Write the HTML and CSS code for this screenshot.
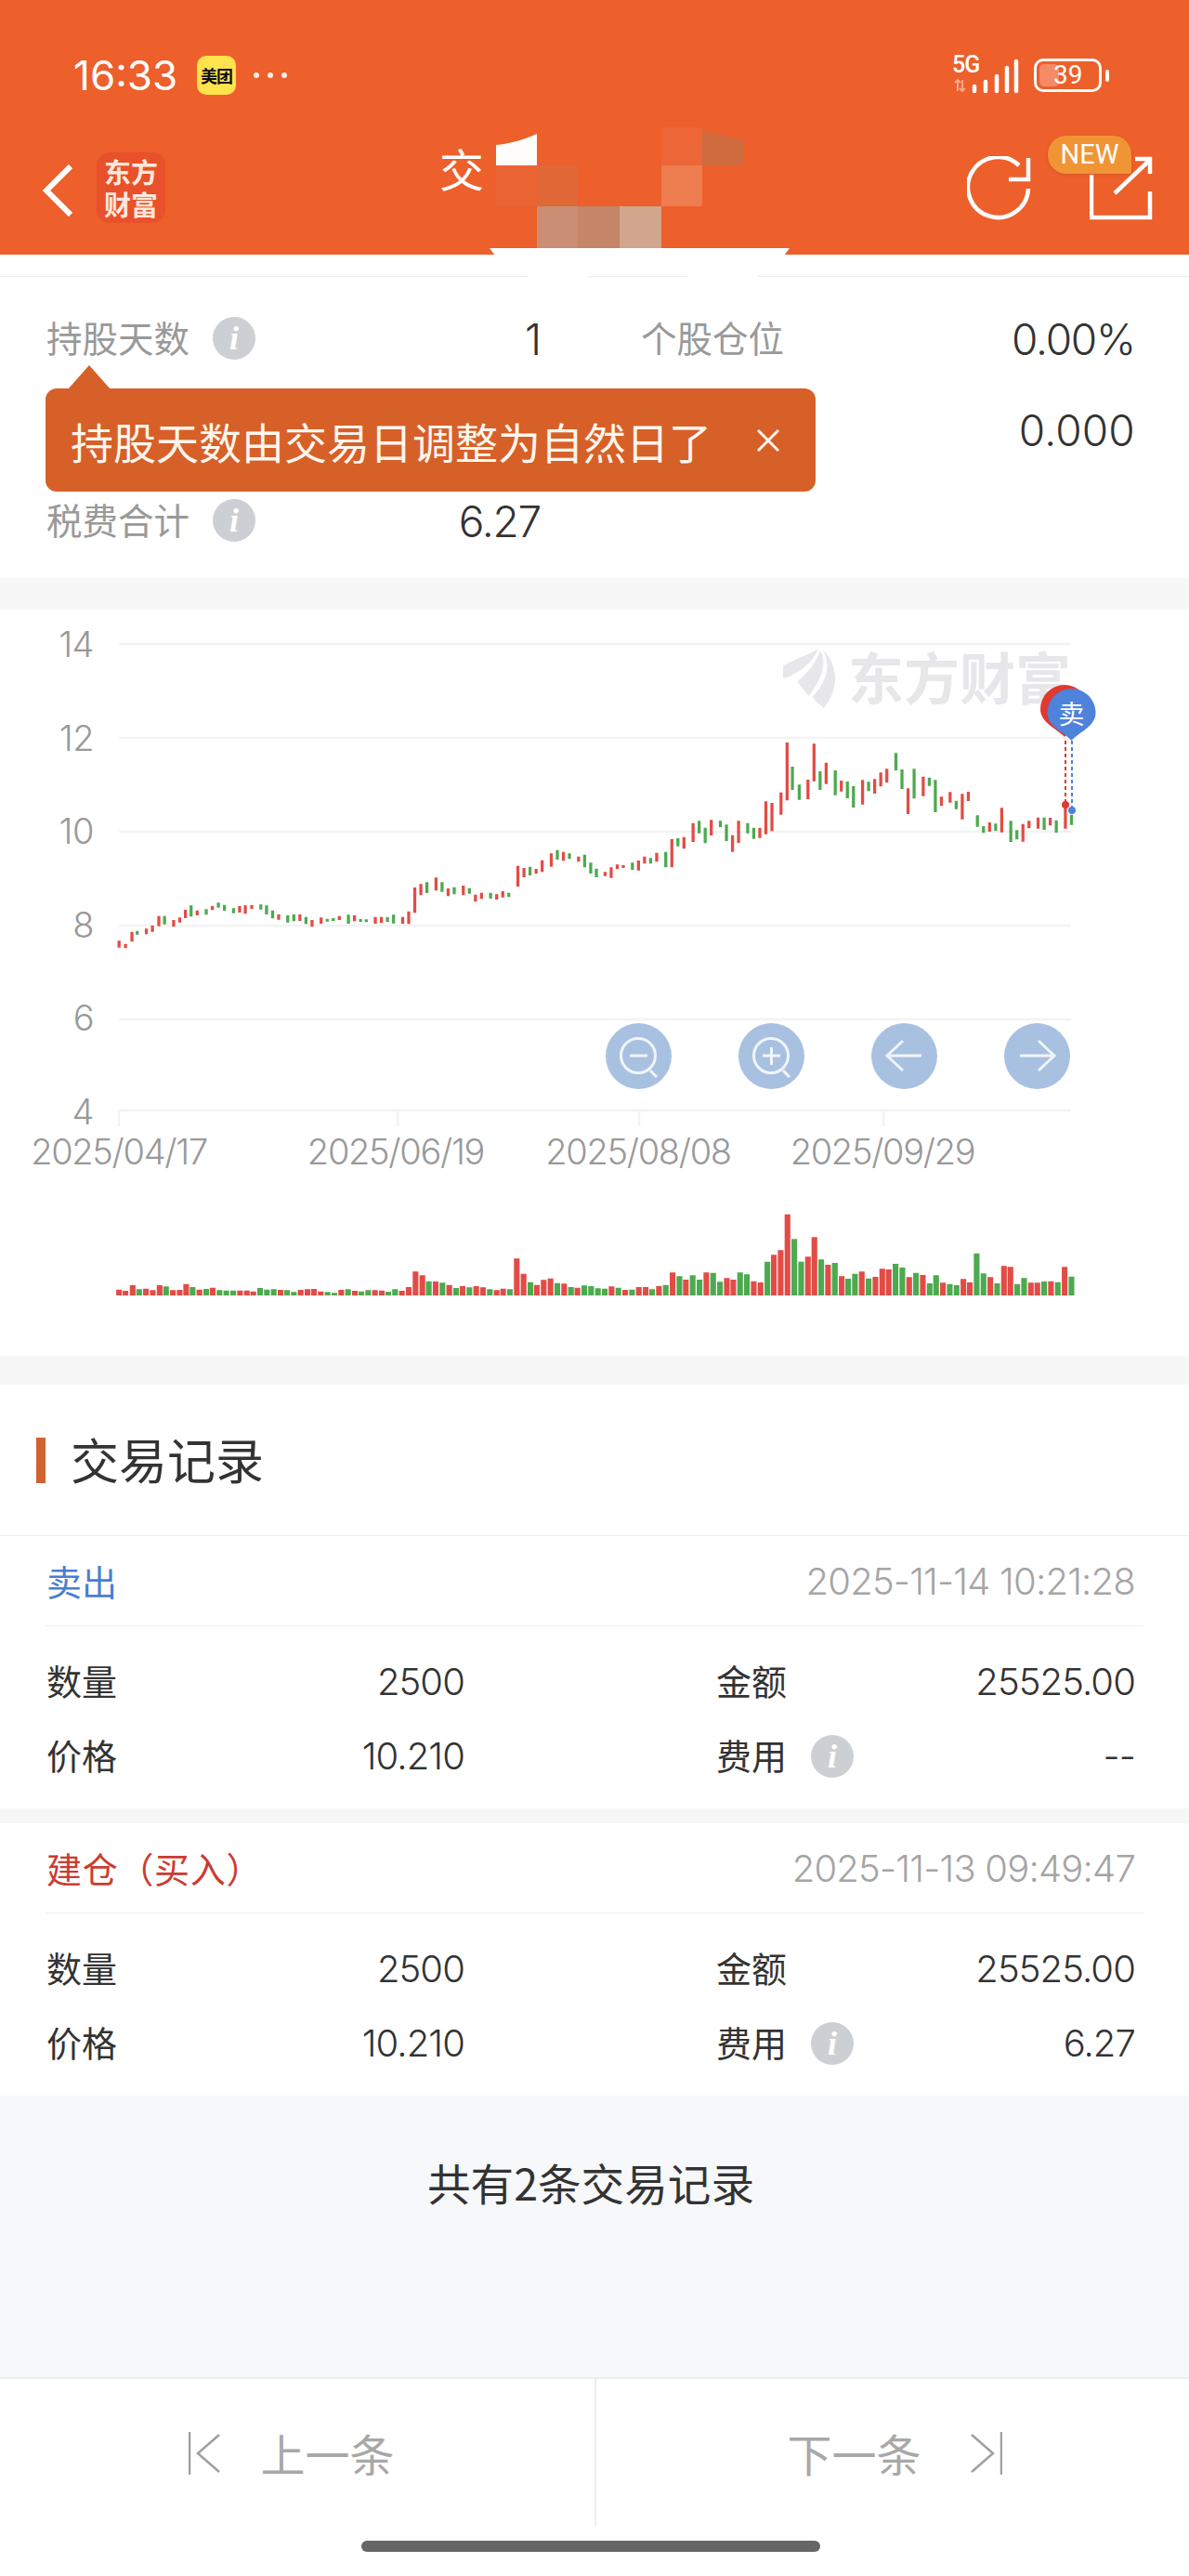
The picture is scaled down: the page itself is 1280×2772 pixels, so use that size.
FILE: index.html
```html
<!DOCTYPE html>
<html lang="zh-CN">
<head>
<meta charset="utf-8">
<title>交易详情</title>
<link rel="stylesheet" href="styles.css">
</head>
<body>
<div class="app">
  <header class="header">
    <div class="status">
      <div class="status-left">
        <span class="clock">16:33</span>
        <span class="meituan">美团</span>
        <span class="dots"><i></i><i></i><i></i></span>
      </div>
      <div class="status-right">
        <svg class="signal" width="72" height="44" viewBox="0 0 72 44">
          <text class="net" x="0" y="19">5G</text>
          <path class="sig-faint" d="M6 27v12M3 30l3-3 3 3M11 39V27M8 36l3 3 3-3"/>
          <path class="sig" d="M24 34v5M36 29v10M48 23v16M59 14v25M69 7v32"/>
        </svg>
        <span class="battery"><span class="battery-fill"></span><span class="battery-num">39</span></span>
        <span class="battery-tip"></span>
      </div>
    </div>
    <nav class="nav">
      <svg class="back" width="32" height="56" viewBox="0 0 32 56"><path d="M30 2 4 28l26 26"/></svg>
      <div class="logo"><span>东方</span><span>财富</span></div>
      <div class="title">交</div>
      <svg class="reload" width="70" height="70" viewBox="0 0 70 70"><path d="M56 10A32.5 32.5 0 1 0 66 35M66 2V25H45"/></svg>
      <div class="export">
        <svg width="70" height="70" viewBox="0 0 70 70"><path d="M2 20V66H65V38M27 40 65 4M49 3H65V19"/></svg>
        <span class="new">NEW</span>
      </div>
    </nav>
  </header>

  <section class="stats">
    <div class="stat-grid">
      <div class="stat"><span class="label">持股天数<i class="info">i</i></span><span class="value">1</span></div>
      <div class="stat"><span class="label">个股仓位</span><span class="value">0.00%</span></div>
      <div class="stat"></div>
      <div class="stat"><span></span><span class="value value-wide">0.000</span></div>
      <div class="stat"><span class="label">税费合计<i class="info">i</i></span><span class="value">6.27</span></div>
    </div>
    <div class="tip">
      <span>持股天数由交易日调整为自然日了</span>
      <svg class="tip-close" width="24" height="24" viewBox="0 0 24 24"><path d="M1 1l22 22M23 1 1 23"/></svg>
    </div>
  </section>

  <section class="chart">
    <svg class="chart-svg" width="1280" height="803" viewBox="0 656 1280 803">
      <path class="grid" d="M128 693H1153M128 794H1153M128 895H1153M128 996H1153M128 1097H1153M128 1195H1153M128 1195V1212M428 1195V1212M688 1195V1212M951 1195V1212"/>
      <g class="axis">
        <text x="101" y="707">14</text><text x="101" y="808">12</text><text x="101" y="908">10</text>
        <text x="101" y="1009">8</text><text x="101" y="1109">6</text><text x="101" y="1210">4</text>
      </g>
      <g class="dates">
        <text x="128" y="1253">2025/04/17</text><text x="426" y="1253">2025/06/19</text>
        <text x="687" y="1253">2025/08/08</text><text x="950" y="1253">2025/09/29</text>
      </g>
      <g class="mark-logo" transform="translate(640 650) scale(.40816 .33333)">
        <path d="M497 200C530 175 565 165 590 145 575 190 545 215 520 230 510 238 500 240 497 238Z"/>
        <path d="M535 250C560 225 585 190 595 150 615 190 600 240 565 297Z"/>
        <path d="M600 145C640 190 650 270 605 335 590 320 580 310 575 300 615 250 625 190 600 145Z"/>
      </g>
      <text class="mark-text" x="913" y="753">东方财富</text>

      <g class="candles" transform="translate(0 650) scale(.40816 .33333)">
        <path class="up" d="M314 1087V1109M331 1097V1111M348 1058V1090M386 1048V1066M402 1038V1058M419 1007V1040M458 1020V1042M474 1012V1028M489 987V1014M520 989V1005M560 975V988M632 975V996M647 973V1000M664 972V984M735 1002V1019M791 1002V1023M823 1020V1042M847 1012V1032M895 1007V1020M935 1005V1024M990 1010V1032M1006 1010V1029M1062 1010V1032M1078 992V1033M1094 915V997M1110 904V940M1150 883V925M1182 918V943M1222 909V940M1254 938V961M1270 932V952M1310 937V954M1326 927V947M1366 845V912M1382 852V882M1414 855V871M1430 827V865M1454 805V848M1486 800V829M1526 815V832"/>
        <path class="down" d="M362 1055V1067M434 1007V1034M504 973V1009M544 985V1003M576 964V980M592 971V990M616 982V998M688 970V986M703 973V1002M719 989V1015M759 1005V1028M775 1002V1024M807 1010V1033M863 1016V1025M879 1014V1023M919 1003V1032M951 1017V1026M966 1018V1027M1022 1011V1026M1038 1003V1031M1126 898V933M1166 898V929M1198 914V937M1238 917V935M1294 932V951M1342 932V946M1398 848V876M1470 794V825M1502 805V823M1542 809V850M1558 835V870"/>
      </g>
      <g class="candles" transform="translate(640 650) scale(.40816 .33333)">
        <path class="up" d="M28 865V878M44 850V884M60 841V856M76 843V852M116 828V860M132 815V838M164 803V832M204 759V850M236 752V790M260 707V768M308 697V747M364 746V800M380 700V771M436 722V755M452 637V743M468 642V733M492 608V680M508 447V634M563 567V630M579 451V572M611 512V581M651 570V605M707 568V647M739 565V612M755 544V589M771 532V576M827 595V678M867 557V620M915 622V652M938 607V641M970 613V695M986 606V636M1042 705V735M1074 658V737M1130 710V767M1146 700V724M1170 689V725M1202 690V715M1242 650V725"/>
        <path class="down" d="M5 854V882M100 835V858M148 820V838M188 800V850M220 756V782M276 700V740M292 722V772M332 700V720M348 712V765M404 707V740M420 722V758M522 525V600M540 583V632M595 540V600M635 537V617M667 573V627M683 588V657M723 574V604M795 481V537M811 534V597M843 532V628M883 560V587M899 568V672M954 635V662M1010 682V719M1026 717V739M1058 709V732M1098 700V768M1114 730V760M1186 689V729M1218 698V738M1258 680V713"/>
      </g>

      <path class="dash-red" d="M1147 797V863"/>
      <path class="dash-blue" d="M1154 797V870"/>
      <circle class="dot-red" cx="1147" cy="866" r="4"/>
      <circle class="dot-blue" cx="1154" cy="872" r="4"/>
      <path class="dot-red" d="M1146 793C1138 784 1120 778 1120 763A26 26 0 1 1 1172 763C1172 778 1154 784 1146 793Z"/>
      <path class="dot-blue" d="M1153.500 797C1146 788 1127.500 782 1127.500 767A26 26 0 1 1 1179.500 767C1179.500 782 1161 788 1153.500 797Z"/>
      <text class="pin-text" x="1153.500" y="779">卖</text>

      <g class="zoom-btns">
        <circle cx="687.500" cy="1136.500" r="35.500"/><circle cx="830.500" cy="1136.500" r="35.500"/>
        <circle cx="973.500" cy="1136.500" r="35.500"/><circle cx="1116.500" cy="1136.500" r="35.500"/>
      </g>
      <g class="zoom-ico">
        <circle cx="687" cy="1136" r="18.500"/><path d="M700 1152l7 7M678 1136H697"/>
        <circle cx="830" cy="1136" r="18.500"/><path d="M843 1152l7 7M821 1136H840M830.500 1127V1146"/>
        <path d="M955 1136H992M972 1120 955 1136 972 1152"/>
        <path d="M1098 1136H1135M1118 1120 1135 1136 1118 1152"/>
      </g>

      <g class="vols" transform="translate(0 1040) scale(.40816 .33333)">
        <path class="up" d="M314 1062V1043M331 1062V1047M350 1062V1029M385 1062V1040M403 1062V1045M421 1062V1029M456 1062V1045M474 1062V1044M491 1062V1025M526 1062V1043M561 1062V1037M633 1062V1046M651 1062V1046M668 1062V1049M740 1062V1044M793 1062V1044M811 1062V1042M828 1062V1041M846 1062V1049M900 1062V1044M936 1062V1047M989 1062V1045M1007 1062V1046M1060 1062V1047M1078 1062V1035M1096 1062V985M1114 1062V997M1149 1062V1017M1185 1062V1028M1220 1062V1032M1256 1062V1032M1274 1062V1036M1310 1062V1045M1327 1062V1040M1363 1062V943M1381 1062V992M1416 1062V1028M1434 1062V1012M1452 1062V1007M1488 1062V1024M1523 1062V1037"/>
        <path class="down" d="M367 1062V1042M438 1062V1033M508 1062V1035M544 1062V1041M579 1062V1045M597 1062V1046M615 1062V1046M686 1062V1038M704 1062V1043M722 1062V1042M757 1062V1045M775 1062V1051M864 1062V1051M882 1062V1054M918 1062V1042M953 1062V1049M971 1062V1045M1024 1062V1050M1042 1062V1042M1131 1062V1016M1167 1062V1021M1203 1062V1038M1238 1062V1036M1292 1062V1042M1345 1062V1042M1399 1062V1019M1470 1062V1022M1506 1062V1035M1541 1062V1030M1559 1062V1032"/>
      </g>
      <g class="vols" transform="translate(640 1040) scale(.40816 .33333)">
        <path class="up" d="M45 1062V1033M81 1062V1044M117 1062V1035M135 1062V1035M170 1062V1032M206 1062V988M241 1062V1011M295 1062V988M349 1062V1006M366 1062V1011M420 1062V1016M438 1062V1020M473 1062V931M491 1062V916M509 1062V800M563 1062V937M580 1062V874M616 1062V963M652 1062V1000M705 1062V985M741 1062V1002M759 1062V976M776 1062V978M830 1062V1003M866 1062V996M919 1062V1021M973 1062V1009M990 1062V1020M1044 1062V1003M1080 1062V967M1097 1062V970M1151 1062V1021M1168 1062V1021M1204 1062V1016M1240 1062V970"/>
        <path class="down" d="M9 1062V1039M27 1062V1040M63 1062V1037M99 1062V1043M152 1062V1042M188 1062V1028M224 1062V1000M259 1062V997M277 1062V1011M313 1062V989M331 1062V1018M384 1062V988M402 1062V994M456 1062V953M527 1062V880M545 1062V953M598 1062V946M634 1062V957M669 1062V1008M687 1062V992M723 1062V1007M794 1062V960M812 1062V972M848 1062V989M884 1062V1023M901 1062V997M937 1062V1025M955 1062V1029M1008 1062V926M1026 1062V991M1062 1062V1023M1115 1062V1025M1133 1062V1006M1186 1062V1017M1222 1062V1019M1258 1062V1001"/>
      </g>
    </svg>
  </section>

  <section class="records">
    <h2 class="records-title">交易记录</h2>
    <article class="trade">
      <div class="trade-head"><span class="sell">卖出</span><time class="trade-time">2025-11-14 10:21:28</time></div>
      <div class="trade-grid">
        <div class="cell"><span class="name">数量</span><span class="num">2500</span></div>
        <div class="cell"><span class="name">金额</span><span class="num">25525.00</span></div>
        <div class="cell"><span class="name">价格</span><span class="num">10.210</span></div>
        <div class="cell"><span class="name">费用<i class="info info-sm">i</i></span><span class="num">--</span></div>
      </div>
    </article>
    <article class="trade trade-second">
      <div class="trade-head"><span class="buy">建仓（买入）</span><time class="trade-time">2025-11-13 09:49:47</time></div>
      <div class="trade-grid">
        <div class="cell"><span class="name">数量</span><span class="num">2500</span></div>
        <div class="cell"><span class="name">金额</span><span class="num">25525.00</span></div>
        <div class="cell"><span class="name">价格</span><span class="num">10.210</span></div>
        <div class="cell"><span class="name">费用<i class="info info-sm">i</i></span><span class="num">6.27</span></div>
      </div>
    </article>
  </section>

  <section class="summary">共有2条交易记录</section>

  <footer class="pager">
    <div class="pager-btn pager-prev">
      <svg width="34" height="46" viewBox="0 0 34 46"><path d="M1 0V46M33 3 10 23l23 20"/></svg>
      <span>上一条</span>
    </div>
    <div class="pager-btn pager-next">
      <span>下一条</span>
      <svg width="34" height="46" viewBox="0 0 34 46"><path d="M33 0V46M1 3l23 20L1 43"/></svg>
    </div>
  </footer>
  <div class="home"><span class="home-bar"></span></div>

  <svg class="mosaic" width="330" height="170" viewBox="525 135 330 170">
    <path fill="#FFFDFA" d="M534 178V156C548 155 565 150 578 144V178Z"/>
    <rect fill="#EC6637" x="712" y="137" width="44" height="41"/>
    <path fill="#CF6B3E" d="M756 141 800 150V178H756Z"/>
    <rect fill="#EA6434" x="534" y="178" width="44" height="44"/>
    <rect fill="#DF6836" x="578" y="178" width="44" height="44"/>
    <rect fill="#EE7D50" x="712" y="178" width="44" height="44"/>
    <rect fill="#C98E73" x="578" y="222" width="44" height="45"/>
    <rect fill="#C48569" x="622" y="222" width="45" height="45"/>
    <rect fill="#D1A68D" x="667" y="222" width="45" height="45"/>
    <path fill="#FFFFFF" d="M527 267H850L844 275H533Z"/>
    <rect fill="#FFFFFF" x="569" y="295" width="64" height="4"/>
    <rect fill="#FFFFFF" x="739" y="295" width="77" height="4"/>
  </svg>
</div>
</body>
</html>
```

FILE: styles.css
```css
* { box-sizing: border-box; }
html, body { margin: 0; padding: 0; background: #fff; }
body { font-family: Inter, "Noto Sans CJK SC", sans-serif; color: #333; }
.app { position: relative; width: 1280px; height: 2772px; overflow: hidden; background: #fff; }

/* header */
.header { height: 274px; background: #ED5F2B; color: #fff; padding-top: 60px; }
.status { display: flex; justify-content: space-between; align-items: center; height: 42px; padding: 0 86px 0 79px; }
.status-left { display: flex; align-items: center; }
.clock { font-size: 44px; font-weight: 400; width: 133px; line-height: 42px; }
.meituan { display: flex; align-items: center; justify-content: center; width: 42px; height: 42px; border-radius: 10px; background: #FFE34D; color: #111; font-family: "Noto Sans CJK SC", sans-serif; font-size: 18px; font-weight: 700; line-height: 1; letter-spacing: -1px; }
.dots { display: flex; gap: 9px; margin-left: 19px; }
.dots i { width: 6px; height: 6px; border-radius: 50%; background: #fff; opacity: .9; }
.status-right { display: flex; align-items: center; }
.signal { margin-right: 16px; flex: none; overflow: visible; }
.net { font-family: Roboto, sans-serif; font-size: 25px; font-weight: 500; fill: #fff; letter-spacing: -1px; }
.sig { stroke: #fff; stroke-width: 4.500; stroke-linecap: round; fill: none; }
.sig-faint { stroke: #fff; stroke-width: 2; opacity: .45; fill: none; }
.battery { position: relative; display: block; width: 73px; height: 36px; border: 3px solid #fff; border-radius: 10px; }
.battery-fill { position: absolute; left: 3px; top: 3px; bottom: 3px; width: 21px; border-radius: 5px; background: #F48A66; }
.battery-num { position: absolute; left: 18px; top: 0; font-family: Roboto, sans-serif; font-size: 28px; line-height: 30px; color: #fff; }
.battery-tip { width: 4px; height: 13px; border-radius: 2px; background: #fff; margin-left: 4px; }

.nav { display: flex; align-items: flex-start; height: 95px; margin-top: 44px; padding-left: 46px; }
.back { margin-top: 31px; flex: none; }
.back path { fill: none; stroke: #fff; stroke-width: 6; }
.logo { display: flex; flex-direction: column; align-items: center; justify-content: center; width: 74px; height: 76px; margin: 18px 0 0 26px; border-radius: 14px; background: #E8512B; font-family: "Noto Sans CJK SC", sans-serif; font-size: 29px; line-height: 35px; font-weight: 700; color: #FFE9DC; flex: none; }
.title { flex: 1; margin-left: 295px; margin-top: 4px; font-family: "Noto Sans CJK SC", sans-serif; font-size: 48px; line-height: 60px; }
.reload { margin-top: 22px; margin-right: 63px; flex: none; }
.reload path, .export path { fill: none; stroke: #fff; stroke-width: 4.500; }
.export { position: relative; width: 70px; height: 70px; margin-top: 22px; margin-right: 36px; flex: none; }
.export svg { display: block; margin-left: -1px; }
.new { position: absolute; left: -46px; top: -22px; width: 90px; height: 41px; display: flex; align-items: center; justify-content: center; background: #F09436; border-radius: 20px 20px 2px 20px; font-family: Roboto, sans-serif; font-size: 29px; line-height: 1; color: #fff; box-shadow: 0 1px 3px rgba(160,70,20,.35); }

/* stats */
.stats { position: relative; height: 348px; padding-top: 42px; }
.stats::before { content: ""; position: absolute; left: 0; right: 0; top: 23px; height: 1px; background: #E9E9E9; }
.stat-grid { display: grid; grid-template-columns: 532px 532px; column-gap: 108px; grid-auto-rows: 98px; padding-left: 50px; }
.stat { display: flex; justify-content: space-between; align-items: center; }
.label { display: flex; align-items: center; padding-bottom: 6px; font-family: "Noto Sans CJK SC", sans-serif; font-size: 38.500px; color: #999; }
.label .info { margin-top: 4px; }
.value { font-size: 46px; font-weight: 300; color: #333; letter-spacing: -1.200px; }
.value-wide { letter-spacing: .2px; }
.info { display: flex; align-items: center; justify-content: center; width: 46px; height: 46px; margin-left: 25px; border-radius: 50%; background: #CCCFD4; color: #fff; font-family: "Liberation Serif", serif; font-size: 36px; font-style: italic; font-weight: 700; line-height: 1; }
.tip { position: absolute; left: 49px; top: 144px; display: flex; align-items: center; justify-content: space-between; width: 829px; height: 111px; padding: 0 39px 0 27px; border-radius: 12px; background: #D66028; color: #FFF6EE; font-family: "Noto Sans CJK SC", sans-serif; font-size: 46px; }
.tip::before { content: ""; position: absolute; left: 24px; top: -25px; border-left: 23px solid transparent; border-right: 23px solid transparent; border-bottom: 26px solid #D66028; }
.tip-close path { fill: none; stroke: #FFF6EE; stroke-width: 3; }

/* chart */
.chart { height: 803px; margin-top: 34px; box-shadow: 0 -34px 0 #F7F7F7, 0 31px 0 #F7F7F7; background: #fff; }
.chart-svg { display: block; }
.grid { fill: none; stroke: #F3F3F3; stroke-width: 2.500; }
.axis text, .dates text { font-family: Inter, sans-serif; font-weight: 300; font-size: 38px; fill: #999; }
.axis text { text-anchor: end; letter-spacing: -.5px; }
.dates text { text-anchor: middle; letter-spacing: -1.300px; }
.mark-logo path { fill: #E7E7EA; }
.mark-text { font-family: "Noto Sans CJK SC", sans-serif; font-size: 60px; font-weight: 700; fill: #E7E7EA; }
.candles path { fill: none; stroke-width: 8; }
.vols path { fill: none; stroke-width: 15; }
.up { stroke: #E24C46; }
.down { stroke: #4CAA4F; }
.dash-red, .dash-blue { fill: none; stroke-width: 2; stroke-dasharray: 4 3; }
.dash-red { stroke: #E0392F; }
.dash-blue { stroke: #4E82DB; }
.dot-red { fill: #E0392F; }
.dot-blue { fill: #4E82DB; }
.pin-text { font-family: "Noto Sans CJK SC", sans-serif; font-size: 28px; fill: #fff; text-anchor: middle; }
.zoom-btns circle { fill: #A9C1E0; }
.zoom-ico circle, .zoom-ico path { fill: none; stroke: #F0F4FA; stroke-width: 3; }

/* records */
.records { margin-top: 31px; font-family: Inter, "Noto Sans CJK SC", sans-serif; }
.records-title { position: relative; height: 163px; margin: 0; padding: 48px 0 0 76px; border-bottom: 1px solid #EEE; font-family: "Noto Sans CJK SC", sans-serif; font-size: 52px; font-weight: 400; line-height: 64px; color: #333; }
.records-title::before { content: ""; position: absolute; left: 39px; top: 57px; width: 10px; height: 49px; background: #D0632F; }
.trade { padding: 0 49px; height: 293px; }
.trade-second { height: 293px; margin-top: 16px; box-shadow: 0 -16px 0 #F7F7F7; }
.trade-head { display: flex; justify-content: space-between; align-items: center; height: 97px; padding: 0 9px 0 1px; border-bottom: 1px solid #EEE; }
.sell, .buy { font-family: "Noto Sans CJK SC", sans-serif; font-size: 38px; padding-bottom: 2px; }
.sell { color: #4A7FCF; }
.buy { color: #CC3B31; letter-spacing: .7px; }
.trade-time { font-size: 40px; font-weight: 300; color: #A5A5A5; letter-spacing: -.8px; }
.trade-grid { display: grid; grid-template-columns: 450px 451px; column-gap: 271px; grid-auto-rows: 80px; padding: 19px 0 0 1px; }
.cell { display: flex; justify-content: space-between; align-items: center; }
.name { display: flex; align-items: center; padding-bottom: 4px; font-family: "Noto Sans CJK SC", sans-serif; font-size: 38px; color: #333; }
.num { font-size: 40px; font-weight: 300; color: #333; letter-spacing: -.9px; }
.info-sm { margin-left: 26px; margin-top: 6px; }

/* summary + pager */
.summary { display: flex; justify-content: center; height: 303px; padding: 64px 8px 0 0; background: #F7F8FA; font-family: "Noto Sans CJK SC", sans-serif; font-size: 46.600px; line-height: 58px; color: #333; }
.pager { display: flex; height: 161px; border-top: 2px solid #EEE; }
.pager-btn { display: flex; justify-content: center; align-items: center; font-family: "Noto Sans CJK SC", sans-serif; font-size: 48px; color: #A8A8A8; }
.pager-btn span { padding-bottom: 2px; }
.pager-btn path { fill: none; stroke: #A0A0A0; stroke-width: 2.500; }
.pager-prev { flex: none; width: 642px; gap: 43px; padding-right: 12px; border-right: 2px solid #EEE; }
.pager-next { flex: 1; gap: 53px; padding-left: 4px; }
.home { display: flex; justify-content: center; padding: 15px 8px 0 0; height: 52px; }
.home-bar { width: 494px; height: 12px; border-radius: 6px; background: #666; }

.mosaic { position: absolute; left: 525px; top: 135px; }
```
